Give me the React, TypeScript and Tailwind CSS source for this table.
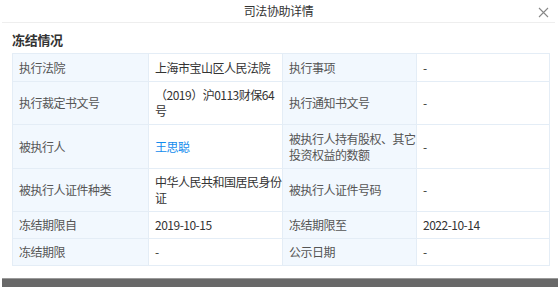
import React from 'react';

type Cell = { text: React.ReactNode; link?: boolean };
type Row = { h: number; cells: [Cell, Cell, Cell, Cell] };

const ROWS: Row[] = [
  { h: 28, cells: [{ text: '执行法院' }, { text: '上海市宝山区人民法院' }, { text: '执行事项' }, { text: '-' }] },
  {
    h: 43,
    cells: [
      { text: '执行裁定书文号' },
      { text: <>（2019）沪0113财保64<br />号</> },
      { text: '执行通知书文号' },
      { text: '-' },
    ],
  },
  {
    h: 44,
    cells: [
      { text: '被执行人' },
      { text: '王思聪', link: true },
      { text: <>被执行人持有股权、其它<br />投资权益的数额</> },
      { text: '-' },
    ],
  },
  {
    h: 43,
    cells: [
      { text: '被执行人证件种类' },
      { text: <>中华人民共和国居民身份<br />证</> },
      { text: '被执行人证件号码' },
      { text: '-' },
    ],
  },
  { h: 27, cells: [{ text: '冻结期限自' }, { text: '2019-10-15' }, { text: '冻结期限至' }, { text: '2022-10-14' }] },
  { h: 27, cells: [{ text: '冻结期限' }, { text: '-' }, { text: '公示日期' }, { text: '-' }] },
];

export default function App() {
  return (
    <div
      className="relative w-[558px] h-[287px] bg-white overflow-hidden text-[#333]"
      style={{ fontFamily: '"Microsoft YaHei", "Noto Sans CJK SC", "Liberation Sans", sans-serif' }}
    >
      {/* Header */}
      <div className="relative h-[23px] ml-[2px] mr-[3px] border-b border-[#eeeeee] flex items-center justify-center">
        <span className="text-[12px] text-[#333] leading-none tracking-[-0.4px]">司法协助详情</span>
        <svg className="absolute right-[6px] top-[7px]" width="11" height="11" viewBox="0 0 11 11">
          <path d="M1 1 L10 10 M10 1 L1 10" stroke="#888" strokeWidth="1.1" fill="none" />
        </svg>
      </div>

      {/* Section title */}
      <div className="pl-[12px] pt-[8px] h-[30px] text-[13px] font-bold text-[#333] leading-[18px] tracking-[-0.3px]">冻结情况</div>

      {/* Table */}
      <table className="ml-[12px] border-collapse text-[12px] leading-[16px] tracking-[-0.5px] table-fixed w-[537px]">
        <colgroup>
          <col className="w-[136px]" />
          <col className="w-[134px]" />
          <col className="w-[134px]" />
          <col className="w-[133px]" />
        </colgroup>
        <tbody>
          {ROWS.map((row, i) => (
            <tr key={i} style={{ height: row.h }}>
              {row.cells.map((c, j) => (
                <td
                  key={j}
                  className={
                    j % 2 === 0
                      ? 'border border-[#e4edf6] bg-[#f2f8fe] px-[6px] py-0 text-[#555] align-middle whitespace-nowrap overflow-hidden'
                      : 'border border-[#e4edf6] bg-white px-[6px] py-0 text-[#333] align-middle whitespace-nowrap overflow-hidden'
                  }
                >
                  {c.link ? <span className="text-[#128bed]">{c.text}</span> : c.text}
                </td>
              ))}
            </tr>
          ))}
        </tbody>
      </table>

      {/* Bottom overlay bar */}
      <div className="absolute left-[2px] right-0 top-[278px] bottom-0 bg-[#686868] border-t border-[#9a9a9a]" />
    </div>
  );
}
